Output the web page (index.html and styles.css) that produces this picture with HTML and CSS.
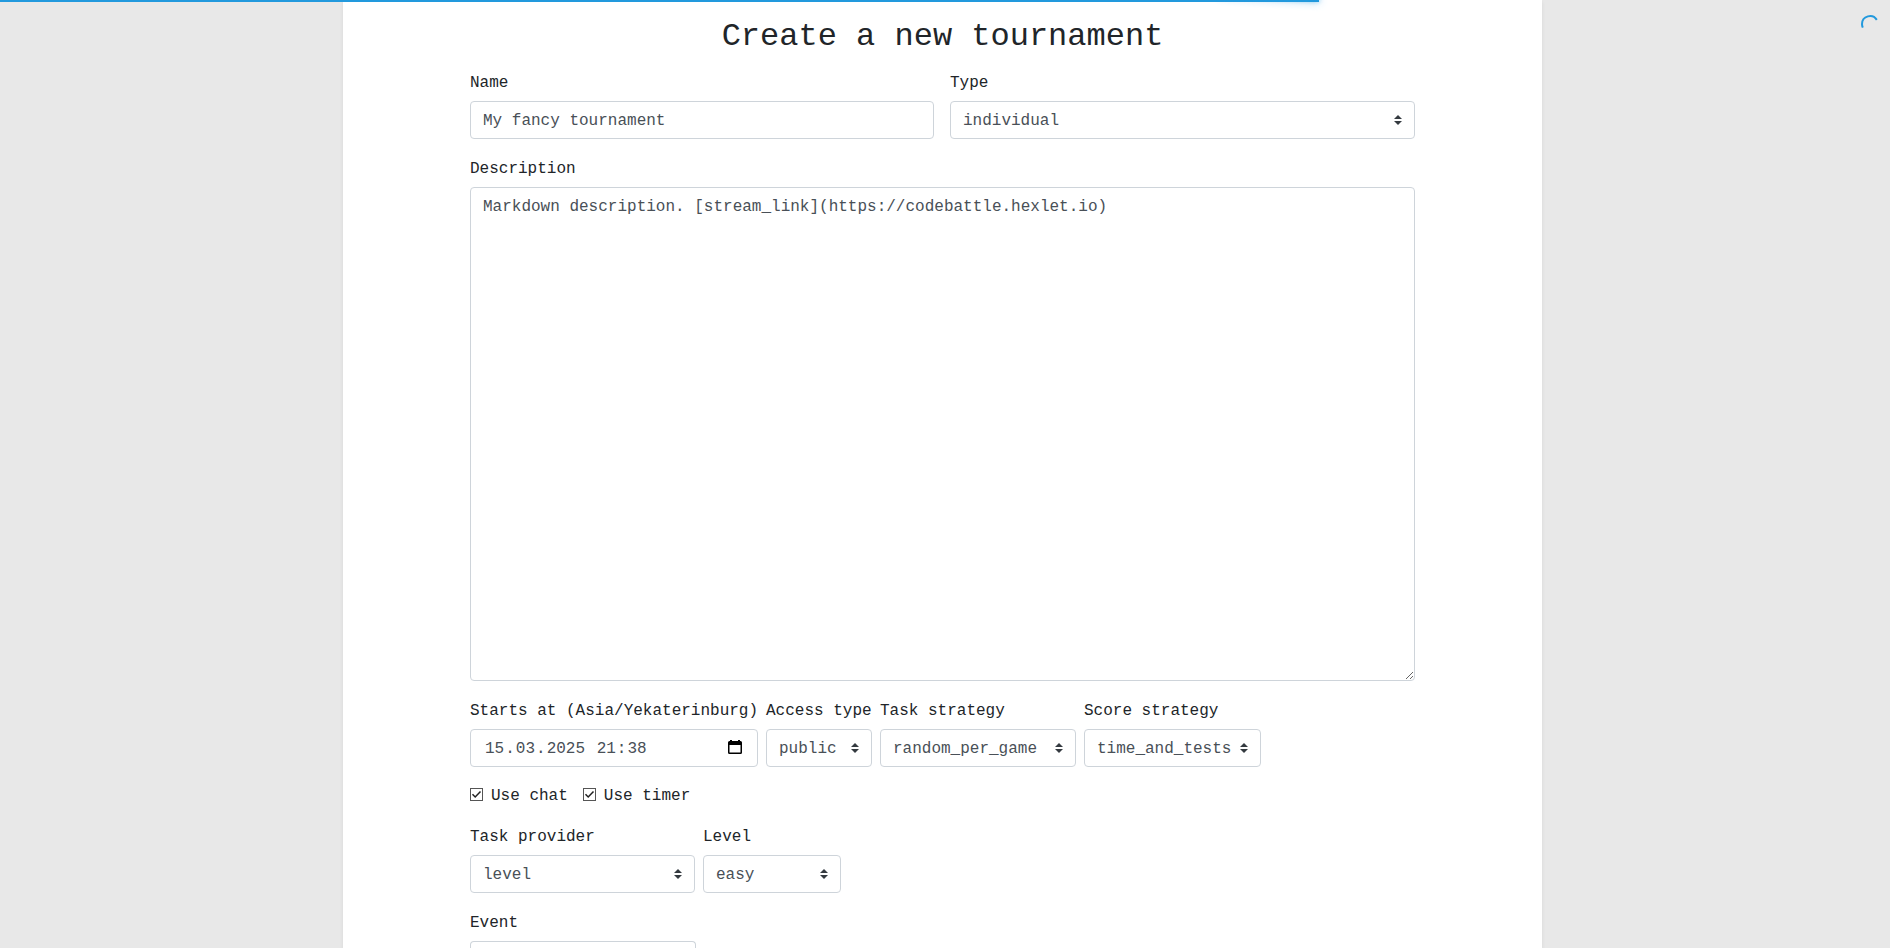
FILE: index.html
```
<!DOCTYPE html>
<html lang="en">
<head>
<meta charset="utf-8">
<title>Create a new tournament</title>
<link rel="stylesheet" href="styles.css">
</head>
<body>
<div class="progress"><div class="progress-peg"></div></div>
<svg class="spinner" viewBox="0 0 18 18"><path d="M1.800 12.600A8 8 0 0 1 1 9A8 8 0 0 1 15.800 4.900"/></svg>
<main class="panel">
  <h1 class="title">Create a new tournament</h1>
  <form class="form">
    <div class="row row-wide">
      <div class="field name"><label class="label" for="name">Name</label><input class="control" id="name" value="My fancy tournament"></div>
      <div class="field type"><label class="label" for="type">Type</label><select class="control select" id="type"><option>individual</option></select></div>
    </div>
    <div class="field description">
      <label class="label" for="description">Description</label>
      <textarea class="control textarea" id="description" spellcheck="false">Markdown description. [stream_link](https://codebattle.hexlet.io)</textarea>
    </div>
    <div class="row">
      <div class="field starts"><span class="label">Starts at (Asia/Yekaterinburg)</span>
        <div class="control date"><span class="date-text"><span class="part">15</span>.<span class="part">03</span>.<span class="part">2025</span> <span class="part">21</span>:<span class="part part-last">38</span></span><svg class="calendar" viewBox="0 0 14 15"><path fill-rule="evenodd" d="M2 0h2v1h6V0h2v1h.5Q14 1 14 2.500v10Q14 14 12.500 14h-11Q0 14 0 12.500v-10Q0 1 1.500 1H2zM1.500 5v7.500h11V5z"/></svg></div></div>
      <div class="field access"><label class="label" for="access">Access type</label><select class="control select" id="access"><option>public</option></select></div>
      <div class="field strategy"><label class="label" for="strategy">Task strategy</label><select class="control select" id="strategy"><option>random_per_game</option></select></div>
      <div class="field score"><label class="label" for="score">Score strategy</label><select class="control select" id="score"><option>time_and_tests</option></select></div>
    </div>
    <div class="checks">
      <label class="check"><svg class="box" viewBox="0 0 13 13"><rect x=".5" y=".5" width="12" height="12"/><path d="M2.500 6.300L5.200 9L10.500 3.500"/></svg>Use chat</label>
      <label class="check"><svg class="box" viewBox="0 0 13 13"><rect x=".5" y=".5" width="12" height="12"/><path d="M2.500 6.300L5.200 9L10.500 3.500"/></svg>Use timer</label>
    </div>
    <div class="row">
      <div class="field provider"><label class="label" for="provider">Task provider</label><select class="control select" id="provider"><option>level</option></select></div>
      <div class="field level"><label class="label" for="level">Level</label><select class="control select" id="level"><option>easy</option></select></div>
    </div>
    <div class="field event"><label class="label" for="event">Event</label><div class="control control-cut" id="event"></div></div>
  </form>
</main>
</body>
</html>
```
FILE: styles.css
```
* { box-sizing: border-box; }
body {
  margin: 0;
  height: 948px;
  overflow: hidden;
  background: #e8e8e8;
  color: #212529;
  font: 16px/24px "Liberation Mono", monospace;
}
.progress { position: fixed; z-index: 2; top: 0; left: 0; width: 1319px; height: 2px; background: #29d; }
.progress-peg {
  position: absolute; right: 0; width: 100px; height: 100%;
  box-shadow: 0 0 10px #29d, 0 0 5px #29d;
  transform: rotate(3deg) translate(0, -4px);
}
.spinner { position: fixed; top: 15px; right: 11px; width: 18px; height: 18px; fill: none; stroke: #29d; stroke-width: 2; }
.panel {
  width: 1199px; height: 948px; margin-left: 343px; padding: 18px 127px 0;
  background: #fff;
  box-shadow: 0 2px 4px rgba(0, 0, 0, .075);
}
.title { margin: 0 0 13px; font-size: 32px; line-height: 38px; font-weight: 400; text-align: center; }
.row { display: flex; gap: 8px; margin-bottom: 16px; }
.row-wide { gap: 16px; }
.name { width: 464px; }
.type { width: 465px; }
.field { display: flex; flex-direction: column; }
.label { height: 26px; padding-top: 2px; margin-bottom: 6px; white-space: nowrap; }
.control {
  display: block; width: 100%; height: 38px; margin: 0; padding: 7px 12px 5px;
  border: 1px solid #ced4da; border-radius: 4px; outline: 0;
  background: #fff; color: #495057; font: inherit;
}
.select {
  appearance: none; padding-right: 24px;
  background: #fff url("data:image/svg+xml,%3csvg xmlns='http://www.w3.org/2000/svg' width='4' height='5' viewBox='0 0 4 5'%3e%3cpath fill='%23343a40' d='M2 0L0 2h4zm0 5L0 3h4z'/%3e%3c/svg%3e") right 12px center / 8px 10px no-repeat;
}
.textarea { height: 494px; resize: vertical; }
.description { margin-bottom: 16px; }
.starts { width: 288px; }
.access { width: 106px; }
.strategy { width: 196px; }
.score { width: 177px; }
.provider { width: 225px; }
.level { width: 138px; }
.event { width: 226px; }
/* only the top of the last control fits in the viewport */
.control-cut { height: 7px; border-bottom: 0; border-radius: 4px 4px 0 0; padding: 0; }
.date { display: flex; justify-content: space-between; padding: 7px 15px 5px 13px; }
.date-text { white-space: nowrap; }
.part { padding: 0 1px; }
.calendar { width: 14px; height: 15px; margin-top: 3px; fill: #000; }
.checks { display: flex; gap: 15px; height: 24px; margin-bottom: 16px; }
.check { display: flex; gap: 8px; padding-top: 1px; }
.box { width: 13px; height: 13px; margin-top: 4px; fill: #fff; stroke: #555; }
.box path { fill: none; stroke: #222; stroke-width: 1.500; }
```
